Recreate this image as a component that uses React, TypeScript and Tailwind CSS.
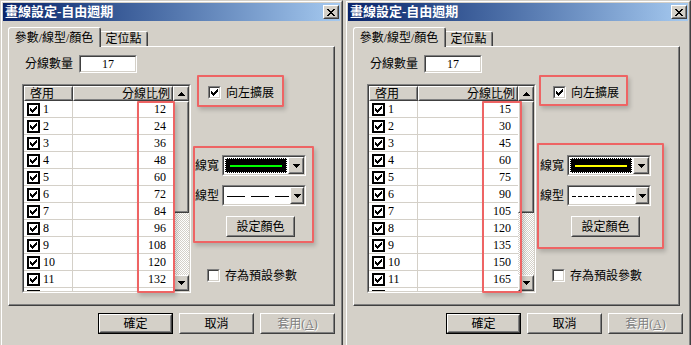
import React from 'react';

const FONT = "font-['Liberation_Serif','Noto_Sans_CJK_TC',serif]";
const SUNK_O = 'border border-t-[#808080] border-l-[#808080] border-r-white border-b-white';
const SUNK_I = 'border border-t-[#404040] border-l-[#404040] border-r-[#d4d0c8] border-b-[#d4d0c8]';
const RAISE_O = 'border border-t-white border-l-white border-r-[#404040] border-b-[#404040]';
const RAISE_I = 'border border-t-[#d4d0c8] border-l-[#d4d0c8] border-r-[#808080] border-b-[#808080]';
const RED = 'absolute z-10 border-2 border-[#ee6464] rounded-[1px] shadow-[2px_3px_4px_rgba(0,0,0,0.18)] pointer-events-none';

type Cfg = {
  values: number[];
  lineColor: string;
  dash: string;
  dashWidth: number;
  numBox: string;
  extBox: string;
  styleBox: string;
  shift: string;
};

function Raised({ className = '', children }: { className?: string; children?: React.ReactNode }) {
  return (
    <div className={`${RAISE_O} bg-[#d4d0c8] ${className}`}>
      <div className={`${RAISE_I} w-full h-full flex items-center justify-center`}>{children}</div>
    </div>
  );
}

function CheckMark() {
  const rows: [number, number, number][] = [
    [0, 6, 1], [1, 5, 2], [2, 0, 1], [2, 4, 3], [3, 0, 2], [3, 3, 3], [4, 0, 5], [5, 1, 3], [6, 2, 1],
  ];
  return (
    <svg width="7" height="7" viewBox="0 0 7 7" shapeRendering="crispEdges">
      {rows.map(([y, x, w], i) => (
        <rect key={i} x={x} y={y} width={w} height={1} fill="#000" />
      ))}
    </svg>
  );
}

function Arrow({ up }: { up?: boolean }) {
  const rows = up ? [[3, 1], [2, 3], [1, 5], [0, 7]] : [[0, 7], [1, 5], [2, 3], [3, 1]];
  return (
    <svg width="7" height="4" viewBox="0 0 7 4" shapeRendering="crispEdges">
      {rows.map(([x, w], i) => (
        <rect key={i} x={x} y={i} width={w} height={1} fill="#000" />
      ))}
    </svg>
  );
}

function Check3D({ checked }: { checked?: boolean }) {
  return (
    <div className={`${SUNK_O} w-[13px] h-[13px] shrink-0`}>
      <div className={`${SUNK_I} w-full h-full bg-white flex items-center justify-center`}>
        {checked && <CheckMark />}
      </div>
    </div>
  );
}

function Combo({ children }: { children: React.ReactNode }) {
  return (
    <div className={`${SUNK_O} w-[84px] h-[21px]`}>
      <div className={`${SUNK_I} w-full h-full bg-white flex`}>
        <div className="flex-1 flex p-px">{children}</div>
        <Raised className="w-[16px] h-full">
          <Arrow />
        </Raised>
      </div>
    </div>
  );
}

function Dialog({ cfg }: { cfg: Cfg }) {
  return (
    <div className={`h-[347px] shrink-0 border border-t-[#d4d0c8] border-l-[#d4d0c8] border-r-[#404040] border-b-[#404040] ${cfg.shift}`}>
      <div className="h-full border border-t-white border-l-white border-r-[#808080] border-b-[#808080] p-px flex flex-col">
        {/* title */}
        <div className="h-[18px] flex items-center justify-between pl-[2px] pr-px bg-gradient-to-r from-[#0a246a] to-[#a6caf0]">
          <span className="text-[13px] leading-[18px] font-bold text-white">畫線設定-自由週期</span>
          <Raised className="w-[16px] h-[14px]">
            <svg width="8" height="7" viewBox="0 0 8 7" shapeRendering="crispEdges">
              <path d="M0 0h2v1h1v1h2V1h1V0h2v1H7v1H6v1H5v1h1v1h1v1h1v1H6V6H5V5H3v1H2v1H0V6h1V5h1V4h1V3H2V2H1V1H0z" fill="#000" />
            </svg>
          </Raised>
        </div>

        {/* tabs */}
        <div className="mt-[6px] ml-[5px] h-[20px] flex items-end relative z-20 -mb-px">
          <div className="w-[93px] h-[20px] bg-[#d4d0c8] border-t border-l border-r border-t-white border-l-white border-r-[#404040] rounded-t-[3px]">
            <div className="h-full border-r border-[#808080] flex items-center justify-center text-[12px] pt-px">參數/線型/顏色</div>
          </div>
          <div className="w-[47px] h-[15px] mb-px bg-[#d4d0c8] border-t border-r border-t-white border-r-[#404040] rounded-tr-[3px]">
            <div className="h-full border-r border-[#808080] flex items-center justify-center text-[12px]">定位點</div>
          </div>
        </div>

        {/* panel */}
        <div className="ml-[5px] w-[327px] h-[260px] border border-t-white border-l-white border-r-[#404040] border-b-[#404040]">
          <div className="relative h-full border-r border-b border-[#808080] flex pt-[8px] pl-[13px]">
            <div className={`${RED} left-[128px] top-[54px] h-[192px] ${cfg.numBox}`} />
            <div className={`${RED} top-[28px] ${cfg.extBox}`} />
            <div className={`${RED} ${cfg.styleBox}`} />

            {/* left column */}
            <div className="w-[169px] flex flex-col">
              <div className="h-[18px] flex items-center">
                <span className="w-[57px] pl-[3px] text-[12px]">分線數量</span>
                <div className={`${SUNK_O} w-[58px] h-[18px]`}>
                  <div className={`${SUNK_I} w-full h-full bg-white flex items-center justify-center text-[12px]`}>17</div>
                </div>
              </div>

              <div className={`${SUNK_O} mt-[11px] w-[169px] h-[209px]`}>
                <div className={`${SUNK_I} w-full h-full bg-white flex overflow-hidden`}>
                  <div className="w-[149px] flex flex-col">
                    <div className="h-[15px] flex shrink-0">
                      <Raised className="w-[49px] h-full">
                        <span className="w-full pl-[4px] text-[12px] leading-none">啓用</span>
                      </Raised>
                      <Raised className="w-[100px] h-full">
                        <span className="w-full pr-[1px] text-right text-[12px] leading-none">分線比例</span>
                      </Raised>
                    </div>
                    {cfg.values.map((v, i) => (
                      <div key={i} className="h-[17px] shrink-0 flex border-b border-[#d4d0c8]">
                        <div className="w-[49px] flex items-center pl-[3px] gap-[3px] border-r border-[#d4d0c8]">
                          <div className="w-[13px] h-[13px] border-2 border-black bg-white flex items-center justify-center">
                            <CheckMark />
                          </div>
                          <span className="text-[12px] leading-none">{i + 1}</span>
                        </div>
                        <div className="flex-1 flex items-center justify-end pr-[7px] text-[12px] leading-none">{v}</div>
                      </div>
                    ))}
                    {/* partly visible 12th row */}
                    <div className="h-[17px] shrink-0 flex">
                      <div className="w-[49px] flex items-center pl-[3px] border-r border-[#d4d0c8]">
                        <div className="w-[13px] h-[13px] border-2 border-black bg-white" />
                      </div>
                    </div>
                  </div>
                  <div className="w-[16px] flex flex-col">
                    <Raised className="h-[15px] shrink-0">
                      <Arrow up />
                    </Raised>
                    <Raised className="h-[112px] shrink-0" />
                    <div className="flex-1 bg-[repeating-conic-gradient(#ffffff_0_25%,#d4d0c8_0_50%)] bg-[length:2px_2px]" />
                    <Raised className="h-[16px] shrink-0">
                      <Arrow />
                    </Raised>
                  </div>
                </div>
              </div>
            </div>

            {/* right column */}
            <div className="ml-[4px] flex flex-col text-[12px]">
              <div className="mt-[31px] pl-[13px] h-[13px] flex items-center gap-[5px]">
                <Check3D checked />
                <span>向左擴展</span>
              </div>
              <div className="mt-[56px] h-[21px] flex items-center">
                <span className="w-[27px]">線寬</span>
                <Combo>
                  <div className="flex-1 bg-black border border-dotted border-white flex items-center px-[4px]">
                    <div className={`h-[2px] w-full ${cfg.lineColor}`} />
                  </div>
                </Combo>
              </div>
              <div className="mt-[9px] h-[21px] flex items-center">
                <span className="w-[27px]">線型</span>
                <Combo>
                  <div className="flex-1 flex items-center pl-[2px]">
                    <svg width={cfg.dashWidth} height="2" viewBox={`0 0 ${cfg.dashWidth} 2`} shapeRendering="crispEdges">
                      <line x1="0" y1="1" x2={cfg.dashWidth} y2="1" stroke="#000" strokeWidth="1" strokeDasharray={cfg.dash} />
                    </svg>
                  </div>
                </Combo>
              </div>
              <Raised className="mt-[10px] ml-[31px] w-[69px] h-[21px]">
                <span>設定顏色</span>
              </Raised>
              <div className="mt-[32px] pl-[12px] h-[13px] flex items-center gap-[5px]">
                <Check3D />
                <span>存為預設參數</span>
              </div>
            </div>
          </div>
        </div>

        {/* buttons */}
        <div className="mt-[7px] pr-[5px] flex justify-end gap-[6px] text-[12px]">
          <div className="w-[75px] h-[21px] border border-black">
            <Raised className="w-full h-full">確定</Raised>
          </div>
          <Raised className="w-[75px] h-[21px]">取消</Raised>
          <Raised className="w-[75px] h-[21px]">
            <span className="text-[#808080] [text-shadow:1px_1px_0_#ffffff]">套用(<span className="underline">A</span>)</span>
          </Raised>
        </div>
      </div>
    </div>
  );
}

const LEFT: Cfg = {
  values: [12, 24, 36, 48, 60, 72, 84, 96, 108, 120, 132],
  lineColor: 'bg-[#00ff00]',
  dash: '18 6',
  dashWidth: 62,
  numBox: 'w-[38px]',
  extBox: 'left-[188px] w-[87px] h-[32px]',
  styleBox: 'left-[184px] top-[99px] w-[121px] h-[97px]',
  shift: 'w-[343px]',
};

const RIGHT: Cfg = {
  values: [15, 30, 45, 60, 75, 90, 105, 120, 135, 150, 165],
  lineColor: 'bg-[#ffff00]',
  dash: '4 2',
  dashWidth: 62,
  numBox: 'w-[40px]',
  extBox: 'left-[185px] w-[89px] h-[31px]',
  styleBox: 'left-[183px] top-[96px] w-[127px] h-[106px]',
  shift: 'w-[348px] pl-[2px]',
};

export default function App() {
  return (
    <div className={`w-[691px] h-[345px] overflow-hidden bg-[#d4d0c8] flex text-black ${FONT}`}>
      <Dialog cfg={LEFT} />
      <Dialog cfg={RIGHT} />
    </div>
  );
}
